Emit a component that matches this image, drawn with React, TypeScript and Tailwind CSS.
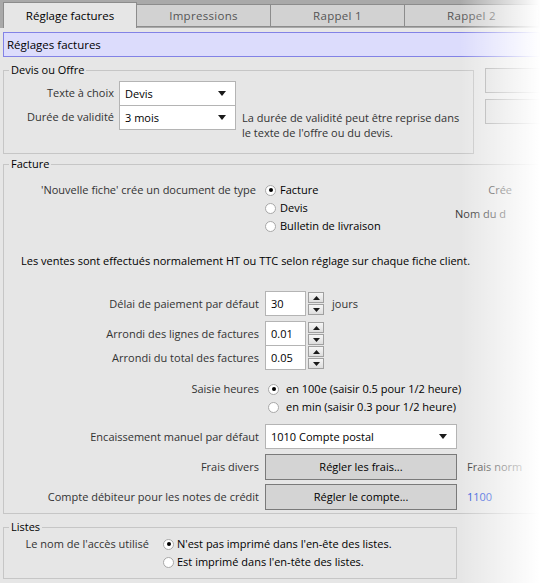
import React from "react";

const font = { fontFamily: '"Segoe UI", "Open Sans", "Noto Sans", sans-serif' };

const Arrow = () => (
  <svg width="8" height="5" viewBox="0 0 8 5" className="shrink-0">
    <path d="M0 0 H8 L4 5 Z" fill="#1a1a1a" />
  </svg>
);

const Combo = ({ value, className }: { value: string; className: string }) => (
  <div
    className={`flex items-center justify-between bg-white border border-[#b4b4b4] pl-[5px] pr-[9px] text-black ${className}`}
  >
    <span>{value}</span>
    <Arrow />
  </div>
);

const Radio = ({ checked }: { checked?: boolean }) => (
  <span className="w-[11px] h-[11px] rounded-full border border-[#a8a8a8] bg-white flex items-center justify-center shrink-0">
    {checked && <span className="w-[4px] h-[4px] rounded-full bg-black" />}
  </span>
);

const SpinBtn = ({ up }: { up?: boolean }) => (
  <div className="w-[16px] h-[11px] border border-[#a0a0a0] bg-linear-to-b from-[#f6f6f6] to-[#dedede] flex items-center justify-center">
    <svg width="7" height="4" viewBox="0 0 7 4">
      <path d={up ? "M0 4 H7 L3.5 0 Z" : "M0 0 H7 L3.5 4 Z"} fill="#1a1a1a" />
    </svg>
  </div>
);

const Spin = ({ value }: { value: string }) => (
  <div className="flex items-center gap-[2px]">
    <div className="w-[41px] h-[25px] bg-white border border-[#b4b4b4] flex items-center pl-[5px] text-black">
      {value}
    </div>
    <div className="flex flex-col gap-[1px]">
      <SpinBtn up />
      <SpinBtn />
    </div>
  </div>
);

const Group = ({
  legend,
  className,
  children,
}: {
  legend: string;
  className: string;
  children: React.ReactNode;
}) => (
  <div className={`relative border border-[#c6c6c6] ${className}`}>
    <span className="absolute -top-[9px] left-[5px] px-[2px] bg-[#e6e6e6] text-black leading-[16px]">
      {legend}
    </span>
    {children}
  </div>
);

const tabs = ["Réglage factures", "Impressions", "Rappel 1", "Rappel 2"];

export default function App() {
  return (
    <div
      className="relative w-[540px] h-[583px] overflow-hidden bg-[#e6e6e6] text-[11px] text-[#333] leading-[16px]"
      style={font}
    >
      {/* Tabs */}
      <div className="flex h-[28px] bg-[#a9a9a9] pl-[3px] items-end">
        {tabs.map((t, i) =>
          i === 0 ? (
            <div
              key={t}
              className="w-[134px] h-[26px] bg-[#e6e6e6] border-t border-l border-r border-[#8c8c8c] flex items-center justify-center text-black text-[11.5px]"
            >
              {t}
            </div>
          ) : (
            <div
              key={t}
              className="w-[134px] h-[23px] mb-[1px] bg-[#d2d2d2] border border-l-0 border-[#8c8c8c] flex items-center justify-center text-[#555] text-[11.5px] tracking-[0.3px]"
            >
              {t}
            </div>
          )
        )}
      </div>

      {/* Header */}
      <div className="mt-[4px] ml-[3px] h-[25px] bg-[#dcdcfc] border border-[#8282e6] flex items-center pl-[3px] text-black text-[11.5px]">
        Réglages factures
      </div>

      {/* Devis ou Offre */}
      <div className="flex mt-[13px] ml-[3px]">
        <Group legend="Devis ou Offre" className="w-[471px] h-[84px] shrink-0">
          <div className="flex pt-[10px] pl-[4px]">
            <div className="w-[106px] flex flex-col items-end">
              <div className="h-[24px] flex items-center">Texte à choix</div>
              <div className="h-[24px] flex items-center">Durée de validité</div>
            </div>
            <div className="ml-[5px] flex flex-col">
              <Combo value="Devis" className="w-[117px] h-[25px]" />
              <Combo value="3 mois" className="w-[117px] h-[25px] -mt-[1px]" />
            </div>
            <div className="ml-[6px] mt-[29px] leading-[15px] w-[228px]">
              La durée de validité peut être reprise dans le texte de l'offre ou du devis.
            </div>
          </div>
        </Group>
        <div className="ml-[11px] flex flex-col gap-[6px] -mt-[2px]">
          <div className="w-[80px] h-[25px] border border-[#a8a8a8] bg-[#e0e0e0]" />
          <div className="w-[80px] h-[25px] border border-[#a8a8a8] bg-[#e0e0e0]" />
        </div>
      </div>

      {/* Facture */}
      <Group legend="Facture" className="mt-[10px] ml-[3px] w-[560px] h-[350px]">
        <div className="flex pt-[16px]">
          <div className="w-[252px] text-right h-[18px] leading-[18px]">
            'Nouvelle fiche' crée un document de type
          </div>
          <div className="ml-[9px] flex flex-col">
            <div className="flex items-center gap-[4px] h-[18px]">
              <Radio checked />
              <span className="text-black">Facture</span>
            </div>
            <div className="flex items-center gap-[4px] h-[18px]">
              <Radio />
              <span className="text-black">Devis</span>
            </div>
            <div className="flex items-center gap-[4px] h-[18px]">
              <Radio />
              <span className="text-black">Bulletin de livraison</span>
            </div>
          </div>
          <div className="ml-auto mr-[50px] flex flex-col items-end text-[#333]">
            <div className="h-[18px] leading-[18px]">Crée</div>
            <div className="h-[18px] leading-[18px] mt-[6px] mr-[6px]">Nom du d</div>
          </div>
        </div>

        <div className="mt-[17px] ml-[17px] text-black h-[18px] leading-[18px]">
          Les ventes sont effectués normalement HT ou TTC selon réglage sur chaque fiche client.
        </div>

        <div className="mt-[21px] flex flex-col">
          <div className="flex items-center h-[25px]">
            <div className="w-[255px] text-right">Délai de paiement par défaut</div>
            <div className="ml-[6px]">
              <Spin value="30" />
            </div>
            <div className="ml-[8px]">jours</div>
          </div>
          <div className="flex items-center h-[25px] mt-[5px]">
            <div className="w-[255px] text-right">Arrondi des lignes de factures</div>
            <div className="ml-[6px]">
              <Spin value="0.01" />
            </div>
          </div>
          <div className="flex items-center h-[25px] -mt-[1px]">
            <div className="w-[255px] text-right">Arrondi du total des factures</div>
            <div className="ml-[6px]">
              <Spin value="0.05" />
            </div>
          </div>
        </div>

        <div className="flex mt-[10px]">
          <div className="w-[255px] text-right h-[18px] leading-[18px]">Saisie heures</div>
          <div className="ml-[9px] flex flex-col">
            <div className="flex items-center gap-[7px] h-[18px]">
              <Radio checked />
              <span className="text-black">en 100e (saisir 0.5 pour 1/2 heure)</span>
            </div>
            <div className="flex items-center gap-[7px] h-[18px]">
              <Radio />
              <span className="text-black">en min (saisir 0.3 pour 1/2 heure)</span>
            </div>
          </div>
        </div>

        <div className="flex items-center mt-[8px] h-[25px]">
          <div className="w-[255px] text-right">Encaissement manuel par défaut</div>
          <Combo value="1010 Compte postal" className="ml-[6px] w-[192px] h-[25px]" />
        </div>

        <div className="flex items-center mt-[5px] h-[26px]">
          <div className="w-[255px] text-right">Frais divers</div>
          <div className="ml-[6px] w-[192px] h-[26px] bg-[#d4d4d4] border border-[#7a7a7a] flex items-center justify-center text-black">
            Régler les frais...
          </div>
          <div className="ml-[10px]">Frais norm</div>
        </div>

        <div className="flex items-center mt-[4px] h-[26px]">
          <div className="w-[255px] text-right">Compte débiteur pour les notes de crédit</div>
          <div className="ml-[6px] w-[192px] h-[26px] bg-[#d4d4d4] border border-[#7a7a7a] flex items-center justify-center text-black">
            Régler le compte...
          </div>
          <div className="ml-[10px] text-[#1f4fd8]">1100</div>
        </div>
      </Group>

      {/* Listes */}
      <Group legend="Listes" className="mt-[13px] ml-[3px] w-[454px] h-[52px]">
        <div className="flex pt-[7px]">
          <div className="w-[145px] text-right h-[18px] leading-[18px]">Le nom de l'accès utilisé</div>
          <div className="ml-[14px] flex flex-col">
            <div className="flex items-center gap-[3px] h-[18px]">
              <Radio checked />
              <span className="text-black">N'est pas imprimé dans l'en-ête des listes.</span>
            </div>
            <div className="flex items-center gap-[3px] h-[18px]">
              <Radio />
              <span className="text-black">Est imprimé dans l'en-tête des listes.</span>
            </div>
          </div>
        </div>
      </Group>

      {/* right edge fade */}
      <div className="absolute top-0 right-0 h-full w-[80px] bg-linear-to-r from-transparent to-white pointer-events-none" />
    </div>
  );
}
